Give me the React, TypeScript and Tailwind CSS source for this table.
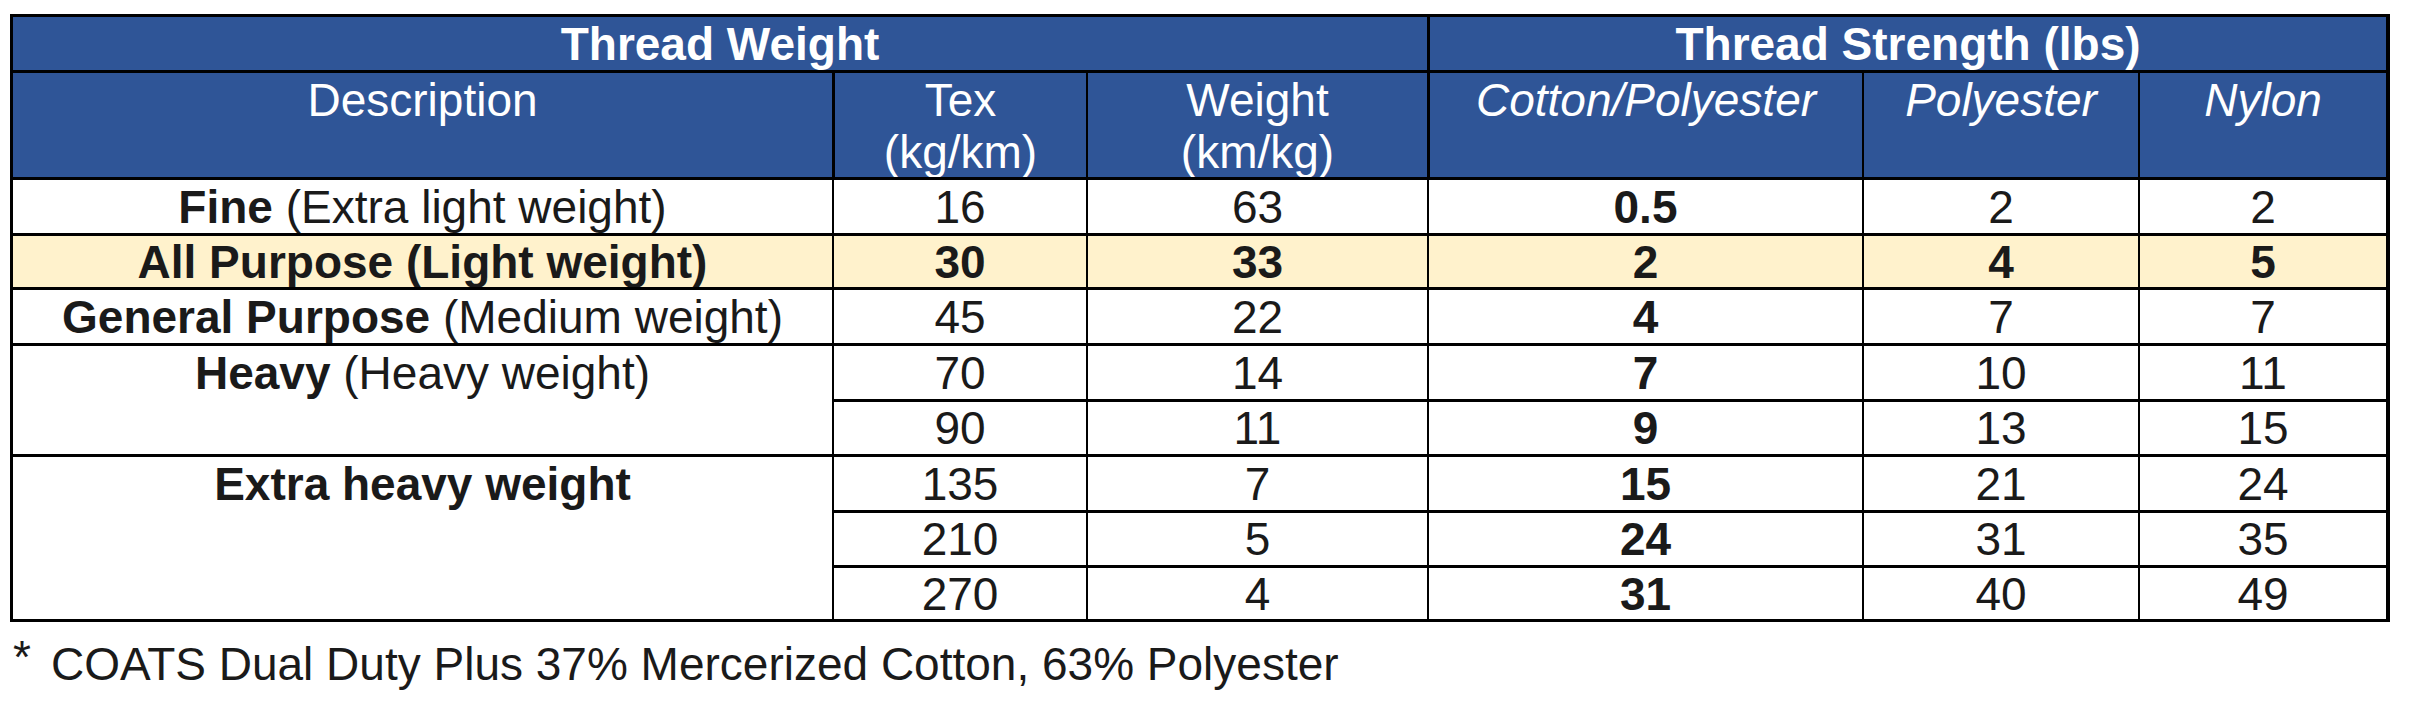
import React from "react";

type Row = {
  tex: string;
  wt: string;
  cp: string;
  po: string;
  ny: string;
};

const rows: Row[] = [
  { tex: "16", wt: "63", cp: "0.5", po: "2", ny: "2" },
  { tex: "30", wt: "33", cp: "2", po: "4", ny: "5" },
  { tex: "45", wt: "22", cp: "4", po: "7", ny: "7" },
  { tex: "70", wt: "14", cp: "7", po: "10", ny: "11" },
  { tex: "90", wt: "11", cp: "9", po: "13", ny: "15" },
  { tex: "135", wt: "7", cp: "15", po: "21", ny: "24" },
  { tex: "210", wt: "5", cp: "24", po: "31", ny: "35" },
  { tex: "270", wt: "4", cp: "31", po: "40", ny: "49" },
];

const cellBase = "border-t-[3px] border-l-[2px] border-black";
const hdr = "bg-[#2f5597] text-white";

function DataCell({
  children,
  bold,
  hl,
}: {
  children: React.ReactNode;
  bold?: boolean;
  hl?: boolean;
}) {
  return (
    <div
      className={`${cellBase} flex items-center justify-center ${
        hl ? "bg-[#fff2cc]" : "bg-white"
      } ${bold ? "font-bold" : ""}`}
    >
      {children}
    </div>
  );
}

export default function App() {
  return (
    <div
      className="bg-white w-[2415px] h-[719px] overflow-hidden pt-[14px] pl-[10px] text-[#1a1a1a] text-[46px] leading-[52px]"
      style={{ fontFamily: '"Liberation Sans", Arial, sans-serif' }}
    >
      <div className="w-[2380px] grid grid-cols-[822px_254px_341px_435px_276px_248px] grid-rows-[56px_107px_56px_54px_56px_56px_55px_56px_55px_54px] border-r-[4px] border-b-[3px] border-black">
        {/* Header row 1 */}
        <div
          className={`${hdr} col-span-3 border-t-[3px] border-l-[3px] border-black flex items-center justify-center font-bold`}
        >
          Thread Weight
        </div>
        <div
          className={`${hdr} col-span-3 border-t-[3px] border-l-[3px] border-black flex items-center justify-center font-bold`}
        >
          Thread Strength (lbs)
        </div>

        {/* Header row 2 */}
        <div className={`${hdr} border-t-[3px] border-l-[3px] border-black text-center pt-[1px]`}>
          Description
        </div>
        <div className={`${hdr} border-t-[3px] border-l-[3px] border-black text-center pt-[1px]`}>
          Tex
          <br />
          (kg/km)
        </div>
        <div className={`${hdr} border-t-[3px] border-l-[2px] border-black text-center pt-[1px]`}>
          Weight
          <br />
          (km/kg)
        </div>
        <div className={`${hdr} border-t-[3px] border-l-[3px] border-black text-center pt-[1px] italic`}>
          Cotton/Polyester
        </div>
        <div className={`${hdr} border-t-[3px] border-l-[2px] border-black text-center pt-[1px] italic`}>
          Polyester
        </div>
        <div className={`${hdr} border-t-[3px] border-l-[2px] border-black text-center pt-[1px] italic`}>
          Nylon
        </div>

        {/* Fine */}
        <div className="border-t-[3px] border-l-[3px] border-black bg-white flex items-center justify-center">
          <span>
            <b>Fine</b> (Extra light weight)
          </span>
        </div>
        <DataCell>{rows[0].tex}</DataCell>
        <DataCell>{rows[0].wt}</DataCell>
        <DataCell bold>{rows[0].cp}</DataCell>
        <DataCell>{rows[0].po}</DataCell>
        <DataCell>{rows[0].ny}</DataCell>

        {/* All Purpose */}
        <div className="border-t-[3px] border-l-[3px] border-black bg-[#fff2cc] flex items-center justify-center font-bold">
          All Purpose (Light weight)
        </div>
        <DataCell bold hl>{rows[1].tex}</DataCell>
        <DataCell bold hl>{rows[1].wt}</DataCell>
        <DataCell bold hl>{rows[1].cp}</DataCell>
        <DataCell bold hl>{rows[1].po}</DataCell>
        <DataCell bold hl>{rows[1].ny}</DataCell>

        {/* General Purpose */}
        <div className="border-t-[3px] border-l-[3px] border-black bg-white flex items-center justify-center">
          <span>
            <b>General Purpose</b> (Medium weight)
          </span>
        </div>
        <DataCell>{rows[2].tex}</DataCell>
        <DataCell>{rows[2].wt}</DataCell>
        <DataCell bold>{rows[2].cp}</DataCell>
        <DataCell>{rows[2].po}</DataCell>
        <DataCell>{rows[2].ny}</DataCell>

        {/* Heavy (2 rows) */}
        <div className="row-span-2 border-t-[3px] border-l-[3px] border-black bg-white text-center pt-[1px]">
          <b>Heavy</b> (Heavy weight)
        </div>
        <DataCell>{rows[3].tex}</DataCell>
        <DataCell>{rows[3].wt}</DataCell>
        <DataCell bold>{rows[3].cp}</DataCell>
        <DataCell>{rows[3].po}</DataCell>
        <DataCell>{rows[3].ny}</DataCell>
        <DataCell>{rows[4].tex}</DataCell>
        <DataCell>{rows[4].wt}</DataCell>
        <DataCell bold>{rows[4].cp}</DataCell>
        <DataCell>{rows[4].po}</DataCell>
        <DataCell>{rows[4].ny}</DataCell>

        {/* Extra heavy (3 rows) */}
        <div className="row-span-3 border-t-[3px] border-l-[3px] border-black bg-white text-center pt-[1px] font-bold">
          Extra heavy weight
        </div>
        {rows.slice(5).map((r) => (
          <React.Fragment key={r.tex}>
            <DataCell>{r.tex}</DataCell>
            <DataCell>{r.wt}</DataCell>
            <DataCell bold>{r.cp}</DataCell>
            <DataCell>{r.po}</DataCell>
            <DataCell>{r.ny}</DataCell>
          </React.Fragment>
        ))}
      </div>

      {/* Footnote */}
      <p className="mt-[16px] pl-[3px] whitespace-nowrap">
        <span className="relative top-[-7px] mr-[20px]">*</span>
        COATS Dual Duty Plus 37% Mercerized Cotton, 63% Polyester
      </p>
    </div>
  );
}
